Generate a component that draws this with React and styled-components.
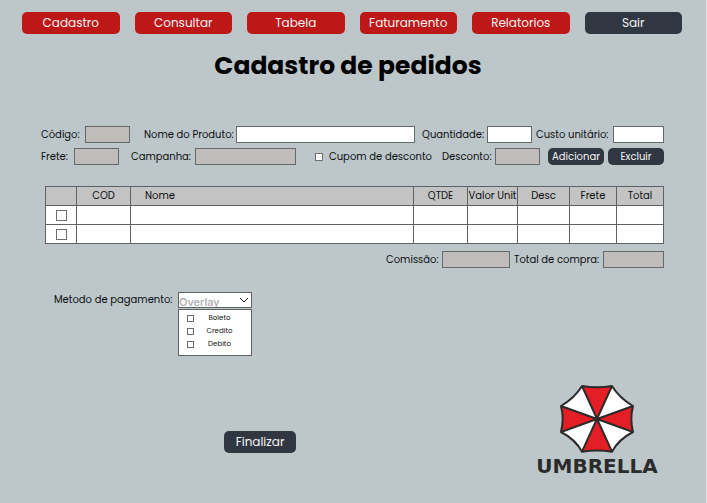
import React from "react";
import styled, { createGlobalStyle } from "styled-components";

const GlobalStyle = createGlobalStyle`
  *, *::before, *::after { box-sizing: border-box; }
  body {
    margin: 0;
    background: #bdc6c9;
    color: #0c0f10;
    font-family: Poppins, Inter, sans-serif;
    font-size: 10px;
    line-height: 16px;
  }
  button, input, select { font: inherit; color: inherit; margin: 0; }
`;

const Page = styled.div`
  min-height: 100vh;
  padding-top: 12px;
  border-right: 1px solid #dde2e4;
`;

const Nav = styled.nav`
  display: grid;
  grid-template-columns: repeat(6, 1fr);
  gap: 15px;
  padding: 0 24px 0 22px;
`;

const Button = styled.button`
  border: 0;
  border-radius: 5px;
  padding: 0;
  height: ${(p) => (p.$small ? "17px" : "22px")};
  width: ${(p) => p.$width || "auto"};
  font-size: ${(p) => (p.$small ? "10px" : "12px")};
  line-height: 16px;
  color: #f4f4f4;
  background: ${(p) => (p.$red ? "#bd1717" : "#313741")};
  white-space: nowrap;
  cursor: pointer;
`;

const Title = styled.h1`
  margin: 15px 10px 43px 0;
  text-align: center;
  font-size: 25px;
  line-height: 34px;
  font-weight: 700;
  color: #000;
`;

const Main = styled.main`
  padding: 0 42px 0 41px;
`;

const Row = styled.div`
  display: flex;
  align-items: center;
  height: 17px;
  margin-bottom: 5px;
`;

const FieldBox = styled.div`
  display: flex;
  align-items: center;
  flex: ${(p) => (p.$grow ? "1 1 0" : "0 0 auto")};
  min-width: 0;
  margin-right: ${(p) => p.$after || 0}px;
`;

const Label = styled.label`
  flex: 0 0 auto;
  width: ${(p) => p.$width}px;
  white-space: nowrap;
`;

const TextInput = styled.input`
  height: 17px;
  width: ${(p) => (p.$width ? `${p.$width}px` : "100%")};
  flex: ${(p) => (p.$width ? "0 0 auto" : "1 1 0")};
  min-width: 0;
  padding: 0 3px;
  border: 1px solid #64696b;
  border-radius: 0;
  background: ${(p) => (p.readOnly ? "#c0bcba" : "#fff")};
`;

const Check = styled.input.attrs({ type: "checkbox" })`
  appearance: none;
  display: block;
  flex: 0 0 auto;
  width: ${(p) => p.$size}px;
  height: ${(p) => p.$size}px;
  border: 1px solid #6d6d6d;
  background: #fff;
  &:checked { background: #313741; }
`;

const CouponField = styled.div`
  display: flex;
  align-items: center;
  gap: 6px;
  margin-right: 12px;
`;

const Actions = styled.div`
  display: flex;
  gap: 4px;
  margin-left: auto;
`;

const Table = styled.table`
  width: calc(100% - 4px);
  margin: 21px 0 7px 4px;
  border-collapse: collapse;
  table-layout: fixed;
  background: #fff;
  th, td {
    height: 19px;
    padding: 0;
    border: 1px solid #5f6262;
    line-height: 16px;
  }
  th {
    font-weight: 400;
    background: #c4c3c3;
    white-space: nowrap;
  }
`;

const Col = styled.col`
  width: ${(p) => (p.$width ? `${p.$width}px` : "auto")};
`;

const NameHead = styled.th`
  && {
    text-align: left;
    padding-left: 14px;
  }
`;

const RowCheck = styled(Check)`
  margin: 0 auto;
`;

const Totals = styled(Row)`
  justify-content: flex-end;
`;

const Payment = styled.div`
  display: flex;
  align-items: flex-start;
  margin: 24px 0 0 13px;
`;

const Dropdown = styled.div`
  width: 74px;
`;

const SelectBox = styled.div`
  position: relative;
  height: 16px;
  svg {
    position: absolute;
    right: 3px;
    top: 4px;
    pointer-events: none;
  }
`;

const Select = styled.select`
  appearance: none;
  display: block;
  width: 100%;
  height: 16px;
  padding: 2px 0 0;
  border: 1px solid #5f6262;
  border-radius: 0;
  background: #fff;
  color: #aaa;
  font-family: Inter, sans-serif;
  font-size: 11px;
  font-weight: 500;
  line-height: 14px;
`;

const Options = styled.div`
  display: grid;
  gap: 3px;
  margin-top: 1px;
  height: 47px;
  padding: 3px 8px 5px;
  align-content: start;
  border: 1px solid #5f6262;
  background: #fff;
`;

const Option = styled.label`
  display: flex;
  align-items: center;
  height: 10px;
  font-size: 7px;
  line-height: 10px;
  span { flex: 1; padding-left: 2px; text-align: center; }
`;

const Footer = styled.footer`
  display: flex;
  align-items: flex-end;
  justify-content: space-between;
  padding: 28px 39px 18px 224px;
`;

const Finish = styled.div`
  margin-bottom: 23px;
`;

const Brand = styled.div`
  display: flex;
  flex-direction: column;
  align-items: center;
  gap: 2px;
  width: 140px;
  color: #2a2b2a;
  font-family: "DejaVu Sans", sans-serif;
  font-size: 20px;
  font-weight: 700;
  line-height: 20px;
  svg { display: block; }
`;

function Field({ id, label, labelWidth, width, readOnly, grow, after }) {
  return (
    <FieldBox $grow={grow} $after={after}>
      <Label htmlFor={id} $width={labelWidth}>{label}</Label>
      <TextInput id={id} $width={width} readOnly={readOnly} />
    </FieldBox>
  );
}

function UmbrellaMark() {
  return (
    <svg width="76" height="70" viewBox="147 28 228 210" aria-hidden="true">
      <path
        d="M216 34Q261 42 306 34Q328 70 369 94Q359 133 369 172Q326 194 306 231Q261 224 216 231Q196 194 153 172Q163 133 153 94Q194 70 216 34Z"
        fill="#fff"
      />
      <g fill="#e31e24">
        <path d="M261 133L216 34Q261 42 306 34Z" />
        <path d="M261 133L369 94Q359 133 369 172Z" />
        <path d="M261 133L306 231Q261 224 216 231Z" />
        <path d="M261 133L153 172Q163 133 153 94Z" />
      </g>
      <g fill="none" stroke="#2a2b2a" strokeWidth="6" strokeLinejoin="round">
        <path d="M216 34Q261 42 306 34Q328 70 369 94Q359 133 369 172Q326 194 306 231Q261 224 216 231Q196 194 153 172Q163 133 153 94Q194 70 216 34Z" />
        <path d="M216 34L306 231M306 34L216 231M153 94L369 172M369 94L153 172" />
      </g>
      <circle cx="261" cy="133" r="7" fill="#2a2b2a" />
    </svg>
  );
}

const navItems = ["Cadastro", "Consultar", "Tabela", "Faturamento", "Relatorios", "Sair"];
const columns = [31, 54, 0, 54, 50, 52, 47, 47];
const heads = ["QTDE", "Valor Unit", "Desc", "Frete", "Total"];
const methods = ["Boleto", "Credito", "Debito"];

export default function App() {
  return (
    <Page>
      <GlobalStyle />
      <Nav>
        {navItems.map((item) => (
          <Button key={item} type="button" $red={item !== "Sair"}>{item}</Button>
        ))}
      </Nav>
      <Title>Cadastro de pedidos</Title>
      <Main>
        <Row>
          <Field id="codigo" label="Código:" labelWidth={44} width={45} readOnly after={14} />
          <Field id="nome" label="Nome do Produto:" labelWidth={92} grow after={7} />
          <Field id="quantidade" label="Quantidade:" labelWidth={65} width={45} after={4} />
          <Field id="custo" label="Custo unitário:" labelWidth={77} width={51} />
        </Row>
        <Row>
          <Field id="frete" label="Frete:" labelWidth={33} width={45} readOnly after={12} />
          <Field id="campanha" label="Campanha:" labelWidth={64} width={101} readOnly after={19} />
          <CouponField>
            <Check id="cupom" $size={8} />
            <Label htmlFor="cupom" $width={101}>Cupom de desconto</Label>
          </CouponField>
          <Field id="desconto" label="Desconto:" labelWidth={53} width={45} readOnly />
          <Actions>
            <Button type="button" $small $width="56px">Adicionar</Button>
            <Button type="button" $small $width="56px">Excluir</Button>
          </Actions>
        </Row>
        <Table>
          <colgroup>
            {columns.map((width, i) => <Col key={i} $width={width} />)}
          </colgroup>
          <thead>
            <tr>
              <th />
              <th>COD</th>
              <NameHead>Nome</NameHead>
              {heads.map((head) => <th key={head}>{head}</th>)}
            </tr>
          </thead>
          <tbody>
            {[1, 2].map((row) => (
              <tr key={row}>
                <td><RowCheck $size={11} aria-label={`Selecionar item ${row}`} /></td>
                {columns.slice(1).map((_, i) => <td key={i} />)}
              </tr>
            ))}
          </tbody>
        </Table>
        <Totals>
          <Field id="comissao" label="Comissão:" labelWidth={56} width={68} readOnly after={4} />
          <Field id="total" label="Total de compra:" labelWidth={89} width={61} readOnly />
        </Totals>
        <Payment>
          <Label htmlFor="metodo" $width={124}>Metodo de pagamento:</Label>
          <Dropdown>
            <SelectBox>
              <Select id="metodo"><option>Overlay</option></Select>
              <svg width="10" height="8" viewBox="0 0 10 8" fill="none" stroke="#222" aria-hidden="true">
                <path d="M1 2L5 6L9 2" />
              </svg>
            </SelectBox>
            <Options>
              {methods.map((method) => (
                <Option key={method}>
                  <Check $size={7} />
                  <span>{method}</span>
                </Option>
              ))}
            </Options>
          </Dropdown>
        </Payment>
      </Main>
      <Footer>
        <Finish>
          <Button type="button" $width="72px">Finalizar</Button>
        </Finish>
        <Brand>
          <UmbrellaMark />
          UMBRELLA
        </Brand>
      </Footer>
    </Page>
  );
}
